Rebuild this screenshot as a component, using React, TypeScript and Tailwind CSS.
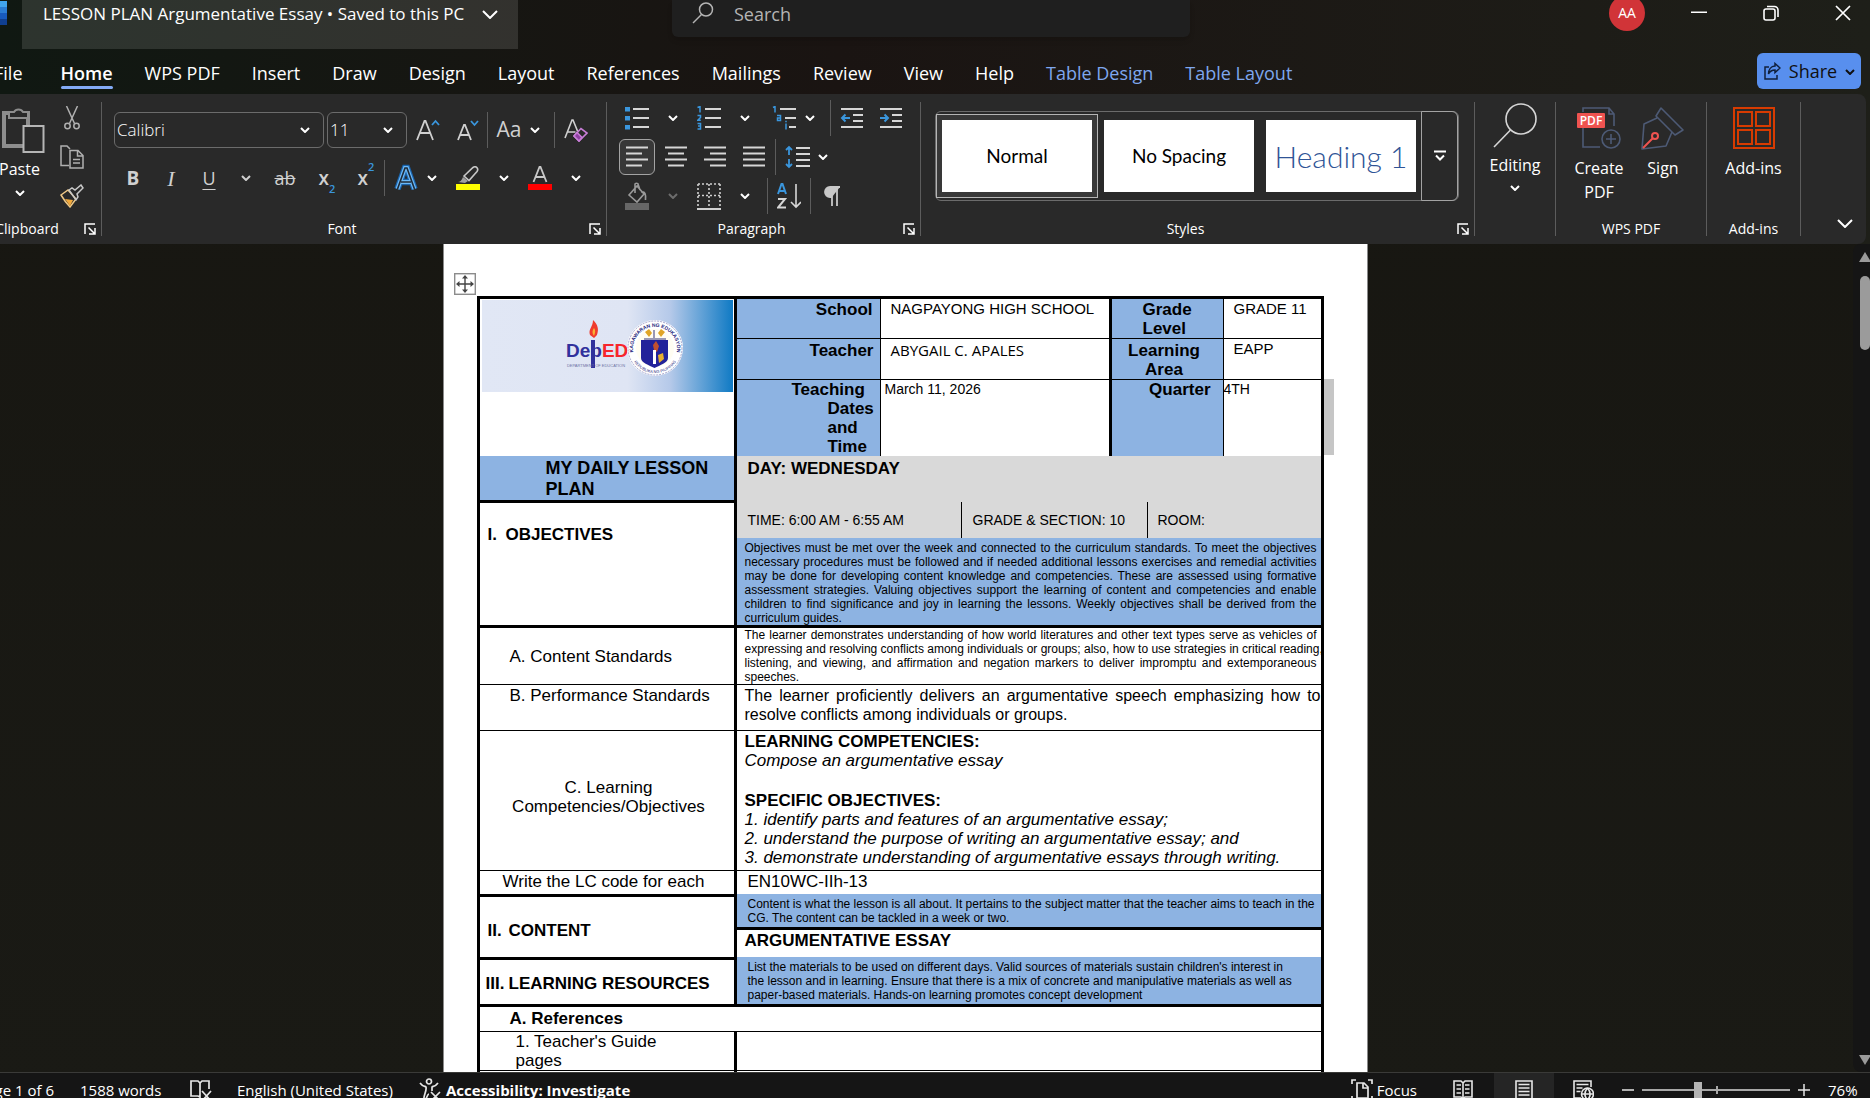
import React from 'react'
import clsx from 'clsx'

interface IChildren {
    children?: React.ReactNode
    className?: string
}

const tabs = ['File', 'Home', 'WPS PDF', 'Insert', 'Draw', 'Design', 'Layout', 'References', 'Mailings', 'Review', 'View', 'Help', 'Table Design', 'Table Layout']

/* ---------- small shared pieces ---------- */

const Chevron = ({ className }: { className?: string }) => (
    <svg className={clsx('h-[6px] w-[10px] shrink-0', className)} viewBox="0 0 10 6" fill="none" stroke="currentColor" strokeWidth="2">
        <path d="M1 1l4 4 4-4" />
    </svg>
)

const Tool = ({ label, className, children }: IChildren & { label: string }) => (
    <button aria-label={label} title={label} className={clsx('flex h-9 shrink-0 items-center justify-center', className)}>
        {children}
    </button>
)

const More = ({ label, className = 'w-9' }: { label: string, className?: string }) => (
    <Tool label={label} className={className}>
        <Chevron />
    </Tool>
)

const Sep = ({ className }: { className?: string }) => <div className={clsx('h-9 w-px shrink-0 bg-[#5c5c5c]', className)} />

const GroupSep = () => <div className="my-2 w-px shrink-0 bg-[#5c5c5c]" />

const Launcher = ({ label }: { label: string }) => (
    <button aria-label={label} className="flex w-6 items-center pl-[7px]">
        <svg className="h-3 w-3" viewBox="0 0 12 12" fill="none" stroke="#fff" strokeWidth="1.5">
            <path d="M1 11V1h10M4.500 4.500l6 6M11 5v6H5" />
        </svg>
    </button>
)

const Group = ({ name, launcher, className, children }: IChildren & { name?: string, launcher?: boolean }) => (
    <section aria-label={name} className={clsx('flex shrink-0 flex-col pb-px', className)}>
        <div className="flex-1">{children}</div>
        <div className="flex h-7 items-center">
            <span className="flex-1 text-center text-[14px] leading-7">{name}</span>
            {launcher && <Launcher label={name + ' settings'} />}
        </div>
    </section>
)

/* ---------- title bar ---------- */

const TitleBar = () => (
    <header className="flex h-[49px] items-start">
        <svg className="mr-[15px] h-[25px] w-[7px]" viewBox="0 0 7 25">
            <path d="M0 1h7v6H0z" fill="#41a5ee" />
            <path d="M0 7h7v6H0z" fill="#2b7cd3" />
            <path d="M0 13h7v6H0z" fill="#185abd" />
            <path d="M0 19h7v6H0z" fill="#103f91" />
        </svg>
        <button className="flex h-[49px] w-[496px] items-start bg-white/12 pl-[21px] text-[17px] leading-7">
            <span className="whitespace-nowrap">LESSON PLAN Argumentative Essay • Saved to this PC</span>
            <svg className="mt-[10px] ml-[18px] h-[9px] w-4" viewBox="0 0 16 9" fill="none" stroke="currentColor" strokeWidth="2">
                <path d="M1 1l7 7 7-7" />
            </svg>
        </button>
        <label className="ml-[154px] flex h-[37px] w-[518px] items-start rounded-b-md bg-[#1f1f1f] pl-[20px] shadow-md">
            <svg className="mt-[2px] h-[22px] w-[22px] shrink-0" viewBox="0 0 22 22" fill="none" stroke="#b4b4b4" strokeWidth="1.5">
                <circle cx="14" cy="7.500" r="6.500" />
                <path d="M9.500 12.500L1 21" />
            </svg>
            <input aria-label="Search" placeholder="Search" className="ml-[20px] h-7 flex-1 bg-transparent text-[18px] outline-none placeholder:text-[#b4b4b4]" />
        </label>
        <div className="ml-auto flex h-[26px] items-center pr-[19px]">
            <button className="mr-[46px] h-9 w-9 shrink-0 rounded-full bg-[#d13438] text-[14px] leading-9">AA</button>
            <button aria-label="Minimize" className="mr-14 h-4 w-4">
                <svg className="h-4 w-4" viewBox="0 0 16 16" stroke="#fff" strokeWidth="1.5"><path d="M0 7.250h16" /></svg>
            </button>
            <button aria-label="Restore" className="mr-14 h-4 w-4">
                <svg className="h-4 w-4" viewBox="0 0 16 16" fill="none" stroke="#fff" strokeWidth="1.600">
                    <rect x="1" y="4" width="11" height="11" rx="2" />
                    <path d="M4 1.500h7.500a3.500 3.500 0 0 1 3.500 3.500v7" />
                </svg>
            </button>
            <button aria-label="Close" className="h-4 w-4">
                <svg className="h-4 w-4" viewBox="0 0 16 16" stroke="#fff" strokeWidth="1.700"><path d="M1 1l14 14M15 1L1 15" /></svg>
            </button>
        </div>
    </header>
)

const TabBar = () => (
    <nav className="flex h-[45px] items-start">
        <div className="-ml-[6px] flex gap-8">
            {tabs.map((tab) => (
                <button
                    key={tab}
                    className={clsx(
                        'relative h-10 pt-2 text-[18px] leading-8 whitespace-nowrap',
                        tab === 'File' && 'mr-[6px]',
                        tab === 'Home' && 'font-semibold',
                        tab.startsWith('Table') && 'text-[#7fa7ee]'
                    )}>
                    {tab}
                    {tab === 'Home' && <span className="absolute inset-x-0 bottom-0 h-[3px] rounded-full bg-[#83aaf5]" />}
                </button>
            ))}
        </div>
        <button className="mt-1 mr-[9px] ml-auto flex h-9 w-[104px] items-center justify-between rounded-md bg-[#588fee] pr-[6px] pl-[7px] text-[18px] text-[#101010]">
            <svg className="h-[18px] w-[17px]" viewBox="0 0 17 18" fill="none" stroke="#10203c" strokeWidth="1.500">
                <path d="M5 5H1v12h12v-4" />
                <path d="M11 1.500l5 4.500-5 4.500V8C8 8 6 9 4.500 12 4.500 7.500 7 4.200 11 4z" />
            </svg>
            <span>Share</span>
            <Chevron className="mt-[2px]" />
        </button>
    </nav>
)

/* ---------- ribbon ---------- */

const ClipboardGroup = () => (
    <Group name="Clipboard" launcher className="-ml-[23px] w-[124px]">
        <div className="flex pl-[14px] pt-[6px]">
            <button className="flex w-[57px] flex-col items-center pt-[7px]">
                <svg className="h-[46px] w-[56px]" viewBox="0 0 56 46" fill="none">
                    <path d="M17 6h-5v33h19M36 18V6h-5" stroke="#8d8d8d" strokeWidth="4" />
                    <path d="M17 11V5h5a5 4.500 0 0 1 9 0h5v6z" stroke="#8d8d8d" strokeWidth="2" fill="#292929" />
                    <rect x="31.500" y="19" width="20" height="26" stroke="#b5b5b5" strokeWidth="2" fill="#292929" />
                </svg>
                <span className="text-[16px] leading-8">Paste</span>
                <Chevron className="mt-[5px]" />
            </button>
            <div className="flex w-12 flex-col items-center gap-[3px]">
                <Tool label="Cut">
                    <svg className="h-6 w-4" viewBox="0 0 16 24" fill="none" stroke="#b0b0b0" strokeWidth="1.500">
                        <path d="M2.500 0l8 17.500M13.500 0l-8 17.500" />
                        <circle cx="3.500" cy="20" r="2.700" />
                        <circle cx="12.500" cy="20" r="2.700" />
                    </svg>
                </Tool>
                <Tool label="Copy">
                    <svg className="h-6 w-6" viewBox="0 0 24 24" fill="none" stroke="#b0b0b0" strokeWidth="1.500">
                        <path d="M9 20.500H1V1h6l3 3" />
                        <path d="M10 5.500h8l5 5V23H10zM17.500 5.500V11H23M13 14.500h7M13 18h7" />
                    </svg>
                </Tool>
                <Tool label="Format Painter">
                    <svg className="h-6 w-6" viewBox="0 0 24 24" fill="none">
                        <path d="M1 11l7-5 8 9-6 8C7 20 4 16 1 11z" stroke="#f0c987" strokeWidth="1.500" />
                        <path d="M5 15l8 1-3 6z" fill="#f2a93c" />
                        <path d="M9 6l3-2 3 2 6-5 2 3-6 6 1 3-2 3z" stroke="#c8c8c8" strokeWidth="1.500" />
                    </svg>
                </Tool>
            </div>
        </div>
    </Group>
)

const FontGroup = () => (
    <Group name="Font" launcher className="w-[504px]">
        <div className="flex flex-col gap-3 pt-[18px] pl-[12px]">
            <div className="flex items-center">
                <div className="relative mr-[3px]">
                    <select aria-label="Font" className="h-9 w-[210px] appearance-none rounded-md border border-[#6b6b6b] bg-transparent pl-[2px] text-[17px] font-light">
                        <option>Calibri</option>
                    </select>
                    <Chevron className="pointer-events-none absolute top-[15px] right-[14px]" />
                </div>
                <div className="relative">
                    <select aria-label="Font size" className="h-9 w-20 appearance-none rounded-md border border-[#6b6b6b] bg-transparent pl-[2px] text-[17px] font-light">
                        <option>11</option>
                    </select>
                    <Chevron className="pointer-events-none absolute top-[15px] right-[14px]" />
                </div>
                <Tool label="Grow Font" className="w-[42px] text-[#d0d0d0]">
                    <svg className="h-6 w-6" viewBox="0 0 24 24" fill="none" strokeWidth="1.800">
                        <path d="M1 22L8.500 3h1L17 22M4 15h10" stroke="currentColor" />
                        <path d="M16 7l3.500-4L23 7" stroke="#3a96dd" />
                    </svg>
                </Tool>
                <Tool label="Shrink Font" className="w-[38px] text-[#d0d0d0]">
                    <svg className="h-6 w-6" viewBox="0 0 24 24" fill="none" strokeWidth="1.800">
                        <path d="M2 22L8 7h1l6 15M4.500 17h8" stroke="currentColor" />
                        <path d="M15 3l3.500 4L22 3" stroke="#3a96dd" />
                    </svg>
                </Tool>
                <Sep />
                <Tool label="Change Case" className="w-[42px] text-[21px] text-[#d0d0d0]">Aa</Tool>
                <More label="Case options" className="w-[10px]" />
                <Sep className="ml-[14px]" />
                <Tool label="Clear Formatting" className="w-[42px] text-[#d0d0d0]">
                    <svg className="h-6 w-6" viewBox="0 0 24 24" fill="none" strokeWidth="1.600">
                        <path d="M1 20L8 2h1l4.500 11M3.500 14h8" stroke="currentColor" />
                        <path d="M10 18l7-7.500 6 4.500-8 8z" stroke="#c77dd6" />
                        <path d="M10 18l3-3.500 5 5-3 3.500z" fill="#8f3fa3" stroke="#c77dd6" />
                    </svg>
                </Tool>
            </div>
            <div className="flex items-center text-[#d0d0d0]">
                <Tool label="Bold" className="w-[38px] text-[19px] font-bold">B</Tool>
                <Tool label="Italic" className="w-[38px] font-['Liberation_Serif'] text-[22px] italic">I</Tool>
                <Tool label="Underline" className="w-[38px] text-[18px] underline underline-offset-4">U</Tool>
                <More label="Underline options" />
                <Tool label="Strikethrough" className="w-[42px] text-[18px] line-through">ab</Tool>
                <Tool label="Subscript" className="w-[42px] text-[19px] font-semibold">
                    x<sub className="-mb-4 text-[11px] text-[#3a96dd]">2</sub>
                </Tool>
                <Tool label="Superscript" className="w-9 text-[19px] font-semibold">
                    x<sup className="-mt-3 text-[11px] text-[#3a96dd]">2</sup>
                </Tool>
                <Sep />
                <Tool label="Text Effects" className="w-[42px]">
                    <svg className="h-7 w-6" viewBox="0 0 24 28" fill="none">
                        <path d="M3.500 25L11 4h2l7.500 21M7 18h10" stroke="#1a64ad" strokeWidth="6.500" />
                        <path d="M3.500 25L11 4h2l7.500 21M7 18h10" stroke="#6cb8f6" strokeWidth="4" />
                        <path d="M3.500 25L11 4h2l7.500 21M7 18h10" stroke="#1f2a36" strokeWidth="1.600" />
                    </svg>
                </Tool>
                <More label="Effect options" className="w-[10px] text-white" />
                <Tool label="Highlight" className="w-[62px]">
                    <svg className="h-6 w-6" viewBox="0 0 24 24" fill="none">
                        <path d="M8 10l9-8.500c3-2 6 1 4 4L13 14.500z" stroke="#c8c8c8" strokeWidth="1.600" />
                        <path d="M2 16c2 0 4-2 5-5l5 4-3 2z" fill="#a0a0a0" />
                        <path d="M0 18h24v6H0z" fill="#ff0" />
                    </svg>
                </Tool>
                <More label="Highlight options" className="w-[10px] text-white" />
                <Tool label="Font Color" className="w-[62px]">
                    <svg className="h-6 w-6" viewBox="0 0 24 24" fill="none">
                        <path d="M5.500 16L11.500 1h1l6 15M8 11h8" stroke="#c8c8c8" strokeWidth="1.800" />
                        <path d="M0 18h24v6H0z" fill="red" />
                    </svg>
                </Tool>
                <More label="Color options" className="w-[10px] text-white" />
            </div>
        </div>
    </Group>
)

const Lines = ({ d }: { d: string }) => (
    <svg className="h-6 w-6" viewBox="0 0 24 24" fill="none" stroke="#d6d6d6" strokeWidth="1.800">
        <path d={d} />
    </svg>
)

const ParagraphGroup = () => (
    <Group name="Paragraph" launcher className="w-[313px]">
        <div className="flex flex-col gap-[3px] pt-[6px] pl-[12px]">
            <div className="flex">
                <Tool label="Bullets" className="w-9">
                    <svg className="h-6 w-6" viewBox="0 0 24 24" strokeWidth="1.800">
                        <path d="M8 3h16M8 12h16M8 21h16" stroke="#d6d6d6" />
                        <path d="M0 1h5v4.500H0zM0 10h5v4.500H0zM0 19h5v4.500H0z" fill="#3a96dd" />
                    </svg>
                </Tool>
                <More label="Bullet options" />
                <Tool label="Numbering" className="w-9">
                    <svg className="h-6 w-6" viewBox="0 0 24 24" fill="none" strokeWidth="1.800">
                        <path d="M8 3h16M8 12h16M8 21h16" stroke="#d6d6d6" />
                        <path d="M.5 1.500L3 .5v6M.5 9.500h3v2L.8 14.200h3M.5 17.500h3v2.500H1h2.500v3H.5" stroke="#3a96dd" strokeWidth="1.500" />
                    </svg>
                </Tool>
                <More label="Numbering options" />
                <Tool label="Multilevel List" className="w-[42px]">
                    <svg className="h-6 w-6" viewBox="0 0 24 24" fill="none" strokeWidth="1.800">
                        <path d="M8 3h16M13 12h11M17 21h7" stroke="#d6d6d6" />
                        <path d="M1 1.500L3 .5v6M5 9.500h3.500v5H5.500v-2.500h3M14 17.500v6M14 14.800v1.400" stroke="#3a96dd" strokeWidth="1.500" />
                    </svg>
                </Tool>
                <More label="List options" className="w-[10px]" />
                <Sep className="ml-[15px]" />
                <Tool label="Decrease Indent" className="w-[42px]">
                    <svg className="h-6 w-6" viewBox="0 0 24 24" fill="none" strokeWidth="1.800">
                        <path d="M1 3h22M13 9h10M13 15h10M1 21h22" stroke="#d6d6d6" />
                        <path d="M10 12H2M5.500 8.500L2 12l3.500 3.500" stroke="#3a96dd" strokeWidth="2" />
                    </svg>
                </Tool>
                <Tool label="Increase Indent" className="w-9">
                    <svg className="h-6 w-6" viewBox="0 0 24 24" fill="none" strokeWidth="1.800">
                        <path d="M1 3h22M13 9h10M13 15h10M1 21h22" stroke="#d6d6d6" />
                        <path d="M1 12h8M5.500 8.500L9 12l-3.500 3.500" stroke="#3a96dd" strokeWidth="2" />
                    </svg>
                </Tool>
            </div>
            <div className="flex">
                <Tool label="Align Left" className="w-9 rounded-md border border-[#a3a3a3] bg-[#383838]"><Lines d="M1 2.500h22M1 8.500h16M1 14.500h22M1 20.500h16" /></Tool>
                <Tool label="Center" className="w-[42px]"><Lines d="M1 2.500h22M4 8.500h16M1 14.500h22M4 20.500h16" /></Tool>
                <Tool label="Align Right" className="w-9"><Lines d="M1 2.500h22M7 8.500h16M1 14.500h22M7 20.500h16" /></Tool>
                <Tool label="Justify" className="w-[42px]"><Lines d="M1 2.500h22M1 8.500h22M1 14.500h22M1 20.500h22" /></Tool>
                <Sep />
                <Tool label="Line Spacing" className="w-[42px]">
                    <svg className="h-6 w-[26px]" viewBox="0 0 26 24" fill="none" strokeWidth="1.800">
                        <path d="M12 3h14M12 9h14M12 15h14M12 21h14" stroke="#d6d6d6" />
                        <path d="M5 10V2M2 5l3-3 3 3M5 14v8M2 19l3 3 3-3" stroke="#3a96dd" />
                    </svg>
                </Tool>
                <More label="Spacing options" className="w-[10px]" />
            </div>
            <div className="flex">
                <Tool label="Shading" className="w-9">
                    <svg className="h-7 w-6" viewBox="0 0 24 28" fill="none" stroke="#9a9a9a" strokeWidth="1.600">
                        <path d="M4 13l8-9 7 8-7 8zM10 11V2c0-1 3-1 3 0l2 6M16 10c4-1 5 2 4.500 8" />
                        <path d="M0 21h24v7H0z" fill="#666" stroke="none" />
                    </svg>
                </Tool>
                <More label="Shading options" className="w-9 text-[#6d6d6d]" />
                <Tool label="Borders" className="w-9">
                    <svg className="h-7 w-6" viewBox="0 0 24 28" fill="none" stroke="#d0d0d0" strokeWidth="1.600">
                        <path d="M1 2h22M12 2v23M1 2v23M23 2v23M1 13.500h22" strokeDasharray="2 2" />
                        <path d="M0 27h24" strokeWidth="2" />
                    </svg>
                </Tool>
                <More label="Border options" />
                <Sep className="ml-1" />
                <Tool label="Sort" className="w-[42px]">
                    <svg className="h-[26px] w-6" viewBox="0 0 24 26" fill="none" strokeWidth="2">
                        <path d="M1 11L4.500 1h1L9 11M2.500 8h5" stroke="#3a96dd" />
                        <path d="M1 16h7l-7 8.500h8" stroke="#d6d6d6" />
                        <path d="M19 1v23M14 19l5 5 5-5" stroke="#d6d6d6" strokeWidth="1.600" />
                    </svg>
                </Tool>
                <Sep />
                <Tool label="Show Marks" className="w-[42px]">
                    <svg className="h-5 w-4" viewBox="0 0 16 20" fill="none" stroke="#c8c8c8" strokeWidth="1.800">
                        <path d="M16 1H6a5 5 0 0 0 0 10h2" fill="#c8c8c8" />
                        <path d="M8 1v19M13 1v19" />
                    </svg>
                </Tool>
            </div>
        </div>
    </Group>
)

const StylesGroup = () => (
    <Group name="Styles" launcher className="min-w-0 flex-1">
        <div className="mt-[17px] ml-[14px] flex h-[90px] w-[524px] items-center rounded-md border border-[#6b6b6b] font-['Lato'] text-black">
            <button className="flex h-[84px] w-[162px] items-center justify-center border border-[#b5b5b5] bg-[#383838]">
                <span className="h-[72px] w-[150px] bg-white text-[19px] leading-[72px]">Normal</span>
            </button>
            <button className="ml-[6px] h-[72px] w-[150px] bg-white text-[19px] leading-[72px]">No Spacing</button>
            <button className="ml-3 h-[72px] w-[150px] bg-white text-[30px] leading-[72px] font-light text-[#2f5496]">Heading 1</button>
            <button aria-label="More styles" className="-my-px ml-auto flex h-[90px] w-[37px] items-center justify-center rounded-r-md border border-[#a3a3a3] text-white">
                <svg className="h-3 w-3" viewBox="0 0 12 12" fill="none" stroke="currentColor" strokeWidth="2">
                    <path d="M0 1.500h12M2 5.500l4 4 4-4" />
                </svg>
            </button>
        </div>
    </Group>
)

const Ribbon = () => (
    <div className="mr-1 flex h-[150px] rounded-r-lg bg-[#292929]">
        <ClipboardGroup />
        <GroupSep />
        <FontGroup />
        <GroupSep />
        <ParagraphGroup />
        <GroupSep />
        <StylesGroup />
        <GroupSep />
        <Group className="w-20">
            <button className="flex w-full flex-col items-center pt-[9px] text-[16px]">
                <svg className="h-[46px] w-[46px]" viewBox="0 0 46 46" fill="none" stroke="#d6d6d6" strokeWidth="1.600">
                    <circle cx="29" cy="16" r="15" />
                    <path d="M18.500 27L2 44" />
                </svg>
                <span className="leading-8">Editing</span>
                <Chevron className="mt-[4px]" />
            </button>
        </Group>
        <GroupSep />
        <Group name="WPS PDF" className="w-[150px]">
            <div className="flex items-start pt-3 pl-[10px] text-[16px] leading-6">
                <button className="flex w-[66px] flex-col items-center">
                    <svg className="mb-[6px] h-11 w-[44px]" viewBox="0 0 44 44" fill="none" stroke="#4d5a75" strokeWidth="1.600">
                        <path d="M6 6V2h26l5 6v12M6 22v19h17M32 2v6h5" />
                        <circle cx="34" cy="33" r="9" />
                        <path d="M34 28v10M29 33h10" />
                        <rect x="0" y="7" width="28" height="15" rx="1" fill="#ef5350" stroke="none" />
                        <text x="14" y="19" fill="#fff" stroke="none" fontSize="12" fontWeight="600" textAnchor="middle">PDF</text>
                    </svg>
                    <span>Create<br />PDF</span>
                </button>
                <button className="flex w-[62px] flex-col items-center">
                    <svg className="mb-[6px] h-11 w-[44px]" viewBox="0 0 44 44" fill="none" stroke="#4d5a75" strokeWidth="1.600">
                        <path d="M20 2l-5 8 19 19 8-5zM16 12L3 18 1 43l24-3 6-14" strokeLinejoin="round" />
                        <path d="M2 42l10-10" stroke="#ef5350" strokeWidth="2" />
                        <circle cx="14" cy="30" r="3" stroke="#ef5350" strokeWidth="2" />
                    </svg>
                    <span>Sign</span>
                </button>
            </div>
        </Group>
        <GroupSep />
        <Group name="Add-ins" className="w-[93px]">
            <button className="flex w-full flex-col items-center pt-3 text-[16px] leading-6">
                <svg className="mb-[6px] h-11 w-[44px]" viewBox="0 0 44 44" fill="none" stroke="#d83b01" strokeWidth="2">
                    <rect x="2" y="2" width="40" height="40" />
                    <path d="M6 6h14v14H6zM24 6h14v14H24zM6 24h14v14H6zM24 24h14v14H24z" />
                </svg>
                <span>Add-ins</span>
            </button>
        </Group>
        <GroupSep />
        <div className="flex w-[65px] items-end justify-end pr-[13px] pb-[16px]">
            <button aria-label="Collapse the ribbon">
                <svg className="h-[9px] w-4" viewBox="0 0 16 9" fill="none" stroke="#fff" strokeWidth="2">
                    <path d="M1 1l7 7 7-7" />
                </svg>
            </button>
        </div>
    </div>
)

/* ---------- document ---------- */

const DepEdBanner = () => (
    <svg className="mt-[1px] ml-[2px] block h-[92px] w-[251px]" viewBox="0 0 251 92" role="img" aria-label="Department of Education">
        <defs>
            <linearGradient id="sky">
                <stop offset="0" stopColor="#e1e7f5" />
                <stop offset=".58" stopColor="#dfe5f4" />
                <stop offset=".75" stopColor="#b5c9e9" />
                <stop offset="1" stopColor="#0f7ac4" />
            </linearGradient>
            <path id="sealTop" d="M153 58a22 22 0 1 1 40 0" />
            <path id="sealBottom" d="M151 60a25 25 0 0 0 44 0" />
        </defs>
        <path d="M0 0h251v92H0z" fill="url(#sky)" />
        <text x="84" y="57" fill="#31319c" fontFamily="Liberation Sans" fontWeight="700" fontSize="19">
            Dep<tspan fill="#f7262c">ED</tspan>
        </text>
        <path d="M109 40h4v28h-4z" fill="#31319c" />
        <path d="M111 20c5 5 6 9 4 15l-3 3-4-3c-2-6 3-8 3-15z" fill="#ef3b2d" />
        <path d="M112 28c2 3 1 5 0 8-2-3-2-5 0-8z" fill="#f9b233" />
        <text x="114" y="67" fill="#6d73a5" fontFamily="Liberation Sans" fontSize="4" textAnchor="middle">DEPARTMENT OF EDUCATION</text>
        <circle cx="173" cy="48" r="28" fill="#fff" />
        <circle cx="173" cy="48" r="27" fill="none" stroke="#8e8fc0" strokeWidth=".8" strokeDasharray="2 1" />
        <text fill="#23237c" fontFamily="Liberation Sans" fontSize="5" fontWeight="700"><textPath href="#sealTop" startOffset="50%" textAnchor="middle">KAGAWARAN NG EDUKASYON</textPath></text>
        <text fill="#23237c" fontFamily="Liberation Sans" fontSize="4"><textPath href="#sealBottom" startOffset="50%" textAnchor="middle">REPUBLIKA NG PILIPINAS</textPath></text>
        <circle cx="173" cy="48" r="19" fill="#fffdf2" />
        <path d="M159 40h27v18c0 5-8 7-13.500 10C167 65 159 63 159 58z" fill="#22229a" />
        <path d="M163 32l4-3 3 4-3 4zM183 32l-4-3-3 4 3 4z" fill="#e0a526" />
        <path d="M172 30v8M162 39h22" stroke="#33337a" />
        <path d="M171 45l3-4 3 5-2 6-3-2z" fill="#c2502f" />
        <path d="M171 50h3v14h-3z" fill="#fff" />
        <path d="M176 55l5-2 1 6-5 4z" fill="#e8b02e" />
    </svg>
)

const LessonPlan = () => (
    <table className="w-[847px] table-fixed border-separate border-spacing-0 border-t-3 border-l-3 border-black font-['Liberation_Sans',sans-serif] text-[17px] leading-[19px] text-black [&_td]:border-black [&_td]:align-top [&_th]:border-black [&_th]:align-top [&_th]:font-bold">
        <colgroup>
            <col className="w-[257px]" />
            <col className="w-[144px]" />
            <col className="w-[81px]" />
            <col className="w-[150px]" />
            <col className="w-[36px]" />
            <col className="w-[76px]" />
            <col className="w-[100px]" />
        </colgroup>
        <tbody>
            <tr className="h-[39px]">
                <td rowSpan={3} className="border-r-3"><DepEdBanner /></td>
                <th scope="row" className="border-r border-b bg-[#8db3e2]"><div className="pt-[1px] pr-[7px] text-right">School</div></th>
                <td colSpan={2} className="border-r-3 border-b pl-[10px] text-[15px]">NAGPAYONG HIGH SCHOOL</td>
                <th scope="row" colSpan={2} className="border-r border-b bg-[#8db3e2] text-left"><div className="pt-[1px] pl-[31px]">Grade<br />Level</div></th>
                <td className="border-r-3 border-b pl-[10px] text-[15px]">GRADE 11</td>
            </tr>
            <tr className="h-[41px]">
                <th scope="row" className="border-r border-b bg-[#8db3e2]"><div className="pt-[2px] pr-[6px] text-right">Teacher</div></th>
                <td colSpan={2} className="border-r-3 border-b pl-[10px] font-['Open_Sans',sans-serif] text-[15px]"><div className="pt-[2px]">ABYGAIL C. APALES</div></td>
                <th scope="row" colSpan={2} className="border-r border-b bg-[#8db3e2]"><div className="pt-[2px] pr-[6px] text-center">Learning<br />Area</div></th>
                <td className="border-r-3 border-b pl-[10px] text-[15px]">EAPP</td>
            </tr>
            <tr className="h-[76px]">
                <th scope="row" className="border-r bg-[#8db3e2] text-left"><div className="pl-[91px] -indent-[36px]">Teaching Dates and Time</div></th>
                <td colSpan={2} className="border-r-3 pl-[4px] text-[14px]">March 11, 2026</td>
                <th scope="row" colSpan={2} className="border-r bg-[#8db3e2]"><div className="pr-[12px] text-right">Quarter</div></th>
                <td className="border-r-3 text-[14px]">4TH</td>
            </tr>
            <tr className="h-[46px]">
                <th rowSpan={3} className="border-r-3 border-b-3 text-left text-[18px] leading-[21px]">
                    <div className="h-[47px] border-b-3 border-black bg-[#8db3e2] pt-[2px] pr-[10px] pl-[66px]">MY DAILY LESSON PLAN</div>
                    <div className="flex pt-[21px] pl-[8px] text-[17px]"><span className="w-[18px]">I.</span>OBJECTIVES</div>
                </th>
                <td colSpan={6} className="border-r-3 bg-[#d9d9d9] pl-[11px] font-bold"><div className="pt-[3px]">DAY: WEDNESDAY</div></td>
            </tr>
            <tr className="h-[36px] text-[14px]">
                <td colSpan={2} className="border-r bg-[#d9d9d9]"><div className="pt-[9px] pl-[11px]">TIME: 6:00 AM - 6:55 AM</div></td>
                <td colSpan={2} className="border-r bg-[#d9d9d9]"><div className="pt-[9px] pl-[11px]">GRADE &amp; SECTION: 10</div></td>
                <td colSpan={2} className="border-r-3 bg-[#d9d9d9]"><div className="pt-[9px] pl-[10px]">ROOM:</div></td>
            </tr>
            <tr className="h-[90px]">
                <td colSpan={6} className="border-r-3 border-b-3 bg-[#8db3e2]">
                    <div className="pt-[3px] pr-[4px] pl-[8px] text-[12px] leading-[14px] [text-align-last:justify]">
                        <div className="whitespace-nowrap">Objectives must be met over the week and connected to the curriculum standards. To meet the objectives</div>
                        <div className="whitespace-nowrap">necessary procedures must be followed and if needed additional lessons exercises and remedial activities</div>
                        <div className="whitespace-nowrap">may be done for developing content knowledge and competencies. These are assessed using formative</div>
                        <div className="whitespace-nowrap">assessment strategies. Valuing objectives support the learning of content and competencies and enable</div>
                        <div className="whitespace-nowrap">children to find significance and joy in learning the lessons. Weekly objectives shall be derived from the</div>
                        <div className="[text-align-last:left]">curriculum guides.</div>
                    </div>
                </td>
            </tr>
            <tr className="h-[57px]">
                <td className="border-r-3 border-b"><div className="pt-[19px] pl-[30px]">A. Content Standards</div></td>
                <td colSpan={6} className="border-r-3 border-b">
                    <div className="pr-[4px] pl-[8px] text-[12px] leading-[14px] [text-align-last:justify]">
                        <div className="whitespace-nowrap">The learner demonstrates understanding of how world literatures and other text types serve as vehicles of</div>
                        <div className="whitespace-nowrap">expressing and resolving conflicts among individuals or groups; also, how to use strategies in critical reading,</div>
                        <div className="whitespace-nowrap">listening, and viewing, and affirmation and negation markers to deliver impromptu and extemporaneous</div>
                        <div className="[text-align-last:left]">speeches.</div>
                    </div>
                </td>
            </tr>
            <tr className="h-[46px]">
                <td className="border-r-3 border-b"><div className="pt-[1px] pl-[30px]">B. Performance Standards</div></td>
                <td colSpan={6} className="border-r-3 border-b">
                    <div className="pt-[1px] pl-[8px] text-[16px] whitespace-nowrap">
                        <div className="[text-align-last:justify]">The learner proficiently delivers an argumentative speech emphasizing how to</div>
                        <div>resolve conflicts among individuals or groups.</div>
                    </div>
                </td>
            </tr>
            <tr className="h-[140px]">
                <td className="border-r-3 border-b"><div className="pt-[47px] pl-[4px] text-center">C. Learning<br />Competencies/Objectives</div></td>
                <td colSpan={6} className="border-r-3 border-b">
                    <div className="pt-[1px] pl-[8px]">
                        <b>LEARNING COMPETENCIES:</b>
                        <p className="mb-[21px] italic">Compose an argumentative essay</p>
                        <b>SPECIFIC OBJECTIVES:</b>
                        <ol className="italic">
                            <li>1. identify parts and features of an argumentative essay;</li>
                            <li>2. understand the purpose of writing an argumentative essay; and</li>
                            <li>3. demonstrate understanding of argumentative essays through writing.</li>
                        </ol>
                    </div>
                </td>
            </tr>
            <tr className="h-[23px]">
                <td className="border-r-3 pl-[23px]"><div className="pt-[1px]">Write the LC code for each</div></td>
                <td colSpan={6} className="border-r-3"><div className="pt-[1px] pl-[11px]">EN10WC-IIh-13</div></td>
            </tr>
            <tr className="h-[36px]">
                <th rowSpan={2} className="border-t-3 border-r-3"><div className="flex pt-[24px] pl-[8px]"><span className="w-[21px] text-left">II.</span>CONTENT</div></th>
                <td colSpan={6} className="border-r-3 border-b-3 bg-[#8db3e2]">
                    <div className="pt-[3px] pl-[11px] text-[12px] leading-[14px] whitespace-nowrap">
                        Content is what the lesson is all about. It pertains to the subject matter that the teacher aims to teach in the<br />
                        CG. The content can be tackled in a week or two.
                    </div>
                </td>
            </tr>
            <tr className="h-[27px]">
                <td colSpan={6} className="border-r-3 font-bold"><div className="pt-[1px] pl-[8px]">ARGUMENTATIVE ESSAY</div></td>
            </tr>
            <tr className="h-[50px]">
                <th className="border-y-3 border-r-3"><div className="flex pt-[14px] pl-[6px]"><span className="w-[23px] text-left">III.</span>LEARNING RESOURCES</div></th>
                <td colSpan={6} className="border-r-3 border-b-3 bg-[#8db3e2]">
                    <div className="pt-[3px] pl-[11px] text-[12px] leading-[14px] whitespace-nowrap">
                        List the materials to be used on different days. Valid sources of materials sustain children's interest in<br />
                        the lesson and in learning. Ensure that there is a mix of concrete and manipulative materials as well as<br />
                        paper-based materials. Hands-on learning promotes concept development
                    </div>
                </td>
            </tr>
            <tr className="h-[25px]">
                <th colSpan={7} className="border-r-3 border-b text-left"><div className="pt-[2px] pl-[30px]">A. References</div></th>
            </tr>
            <tr className="h-[39px]">
                <td className="border-r-3 border-b"><div className="pr-[60px] pl-[36px]">1. Teacher's Guide pages</div></td>
                <td colSpan={6} className="border-r-3 border-b" />
            </tr>
            <tr className="h-[39px]">
                <td className="border-r-3 border-b" />
                <td colSpan={6} className="border-r-3 border-b" />
            </tr>
        </tbody>
    </table>
)

const Document = () => (
    <main className="flex min-h-0 flex-1">
        <div className="flex flex-1 justify-center overflow-hidden pl-[41px]">
            <div className="relative mr-[84px] h-[1200px] w-[925px] shrink-0 border-x border-[#8a8a8a] bg-white pt-[52px] pl-[33px]">
                <svg className="absolute top-[29px] left-[10px] h-[22px] w-[22px] bg-white" viewBox="0 0 22 22" fill="none" stroke="#444" strokeWidth="1.400">
                    <rect x=".7" y=".7" width="20.600" height="20.600" stroke="#8c8c8c" />
                    <path d="M11 3v16M3 11h16" />
                    <path d="M11 2l3 3.500H8zM11 20l3-3.500H8zM2 11l3.500-3v6zM20 11l-3.500-3v6z" fill="#444" stroke="none" />
                </svg>
                <LessonPlan />
                <div className="absolute top-[135px] left-[880px] h-[76px] w-[10px] bg-[#c6c6c6]" />
            </div>
        </div>
        <div className="flex w-[17px] flex-col items-end rounded-l-lg bg-[#151515] pt-[8px] pb-[7px]">
            <svg className="h-[10px] w-[11px]" viewBox="0 0 11 10"><path d="M6 0l6 10H0z" fill="#9b9b9b" /></svg>
            <div className="mt-[14px] h-[74px] w-[10px] rounded-full bg-[#9b9b9b]" />
            <svg className="mt-auto h-[10px] w-[11px]" viewBox="0 0 11 10"><path d="M6 10l6-10H0z" fill="#9b9b9b" /></svg>
        </div>
    </main>
)

/* ---------- status bar ---------- */

const StatusBar = () => (
    <footer className="h-[26px] shrink-0 overflow-hidden border-t border-[#3a3a38] bg-[#151515] text-[15px] leading-[34px]">
        <div className="flex h-[34px] items-center">
            <button className="-ml-[28px] w-[82px] text-right whitespace-nowrap">Page 1 of 6</button>
            <button className="ml-[26px] w-[82px] text-left whitespace-nowrap">1588 words</button>
            <button aria-label="Proofing" className="ml-[28px]">
                <svg className="h-[22px] w-[22px]" viewBox="0 0 22 22" fill="none" stroke="#e6e6e6" strokeWidth="1.700">
                    <path d="M10 18L8 17H1V2h7l2 2 2-2h7v8M10 4v15M12 12l9 10M21 12l-9 10" />
                </svg>
            </button>
            <button className="ml-[25px] w-[158px] text-left whitespace-nowrap">English (United States)</button>
            <button className="ml-[24px] flex items-center gap-[5px] font-bold whitespace-nowrap">
                <svg className="h-[24px] w-[22px]" viewBox="0 0 22 24" fill="none" stroke="#e6e6e6" strokeWidth="1.700">
                    <circle cx="10" cy="3.500" r="2.500" />
                    <path d="M1 5c3 4 5 3 6 4 1 4-3 9-2 13 3 0 3-6 5-6M19 5c-3 4-5 3-6 4v4M12 14l9 9M21 14l-9 9" />
                </svg>
                Accessibility: Investigate
            </button>
            <button className="ml-auto flex items-center gap-1">
                <svg className="h-[22px] w-[22px]" viewBox="0 0 22 22" fill="none" stroke="#e6e6e6" strokeWidth="1.700">
                    <path d="M1 5V1h4M17 1h4v4M1 17v4h4M21 17v4h-4M6 4h7l4 4v11H6zM12 4v5h5" />
                </svg>
                Focus
            </button>
            <button aria-label="Read Mode" className="ml-[36px]">
                <svg className="h-5 w-5" viewBox="0 0 20 20" fill="none" stroke="#e6e6e6" strokeWidth="1.600">
                    <path d="M10 3L8 1H1v16h7l2 2 2-2h7V1h-7zM10 3v16M3.500 5H8M3.500 9H8M3.500 13H8M12 5h4.500M12 9h4.500M12 13h4.500" />
                </svg>
            </button>
            <button aria-label="Print Layout" className="ml-[21px] flex h-[34px] w-[60px] items-center justify-center bg-[#252525]">
                <svg className="h-5 w-[18px]" viewBox="0 0 18 20" fill="none" stroke="#e6e6e6" strokeWidth="1.600">
                    <path d="M1 1h16v18H1zM3.500 4.500h11M3.500 8h11M3.500 11.500h11M3.500 15h11" />
                </svg>
            </button>
            <button aria-label="Web Layout" className="ml-[19px]">
                <svg className="h-5 w-[21px]" viewBox="0 0 21 20" fill="none" stroke="#e6e6e6" strokeWidth="1.600">
                    <path d="M8 18H1V1h17v6M3.500 4.500h12M3.500 8h6M3.500 11.500h4" />
                    <circle cx="14.500" cy="14" r="6" />
                    <path d="M8.500 14h12M14.500 8c-3.500 4-3.500 8 0 12M14.500 8c3.500 4 3.500 8 0 12" />
                </svg>
            </button>
            <button aria-label="Zoom out" className="ml-[28px]">
                <svg className="h-3 w-3" viewBox="0 0 12 12" stroke="#e6e6e6" strokeWidth="1.500"><path d="M0 6h12" /></svg>
            </button>
            <div className="relative ml-2 flex h-4 w-[148px] items-center">
                <span className="absolute left-[74px] h-2 w-[2px] bg-[#a8a8a8]" />
                <input
                    type="range"
                    aria-label="Zoom"
                    min="0"
                    max="100"
                    defaultValue="37"
                    className="h-[2px] w-full appearance-none bg-[#a8a8a8] [&::-webkit-slider-thumb]:h-4 [&::-webkit-slider-thumb]:w-2 [&::-webkit-slider-thumb]:appearance-none [&::-webkit-slider-thumb]:bg-[#b4b4b4]" />
            </div>
            <button aria-label="Zoom in" className="ml-2">
                <svg className="h-3 w-3" viewBox="0 0 12 12" stroke="#e6e6e6" strokeWidth="1.500"><path d="M0 6h12M6 0v12" /></svg>
            </button>
            <button className="mr-[11px] ml-[18px] w-[31px] text-left">76%</button>
        </div>
    </footer>
)

const App = () => {
    return (
        <div className="flex h-screen flex-col overflow-hidden bg-[#171611] bg-linear-to-b from-transparent to-[#1a1a15] font-['Open_Sans',sans-serif] text-white">
            <div className="bg-linear-to-r from-[#101812] via-[#1a1412] via-45% to-[#1e1f19]">
                <TitleBar />
                <TabBar />
                <Ribbon />
            </div>
            <Document />
            <StatusBar />
        </div>
    )
}

export default App
